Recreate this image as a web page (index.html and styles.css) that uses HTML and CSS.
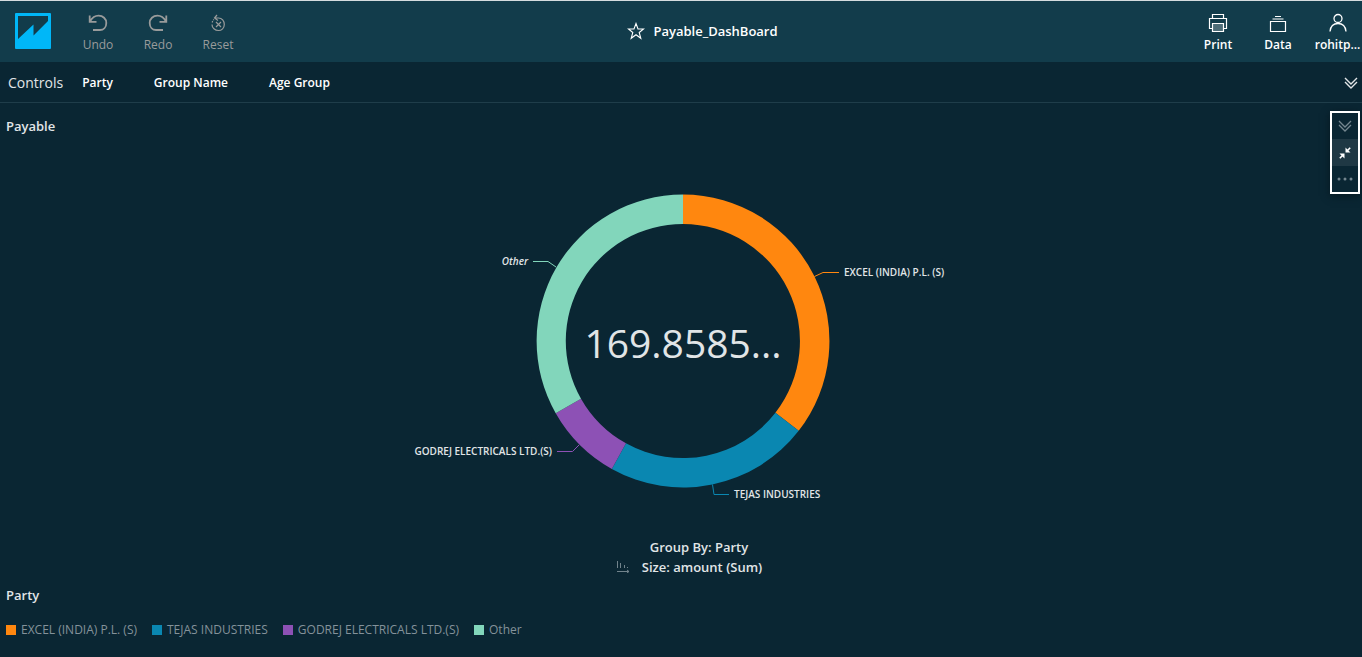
FILE: index.html
```html
<!DOCTYPE html>
<html lang="en">
<head>
<meta charset="utf-8">
<title>Payable_DashBoard</title>
<link rel="stylesheet" href="styles.css">
</head>
<body>
<header class="topbar">
  <div class="topbar-side">
    <a class="logo" href="#" aria-label="Home">
      <svg width="36" height="36" viewBox="0 0 36 36"><rect width="36" height="36" rx="1" fill="#00b7f8"/><path d="M3 3H33V8L18.500 22.500V11.500L3 26Z" fill="#123c4b"/></svg>
    </a>
    <nav class="history">
      <button class="tool muted" type="button">
        <svg width="20" height="20" viewBox="0 0 20 20" fill="none" stroke="currentColor" stroke-width="1.800"><path d="M1.700 2.500V8.800H8.500M2 8.500C4 5 6.500 2.700 10.500 2.700C15 2.700 18.300 5.700 18.300 10C18.300 14.300 15.500 17 12 17H5"/></svg>
        <span>Undo</span>
      </button>
      <button class="tool muted" type="button">
        <svg width="20" height="20" viewBox="0 0 20 20" fill="none" stroke="currentColor" stroke-width="1.800"><path d="M18.300 2.500V8.800H11.500M18 8.500C16 5 13.500 2.700 9.500 2.700C5 2.700 1.700 5.700 1.700 10C1.700 14.300 4.500 17 8 17H15"/></svg>
        <span>Redo</span>
      </button>
      <button class="tool muted" type="button">
        <svg width="20" height="20" viewBox="0 0 20 20" fill="none" stroke="currentColor" stroke-width="1.200"><path d="M9 2L6.500 5L10 7.500M6.500 5H10.500C14 5 16.300 8 16.300 11.500C16.300 15 13.700 17.500 10.500 17.500C7 17.500 4 15 4 11.500"/><path d="M4.200 9.500C4.500 8.300 5 7.300 6 6.500" stroke-dasharray="1.500 1"/><path d="M8 9L13 14M13 9L8 14"/></svg>
        <span>Reset</span>
      </button>
    </nav>
  </div>
  <div class="title">
    <button class="icon-btn" type="button" aria-label="Add to favorites">
      <svg width="18" height="18" viewBox="0 0 18 18" fill="none" stroke="currentColor" stroke-width="1.100"><path d="M9 1.500L11 7H16.500L12.200 10.500L13.800 16.300L9 12.800L4.200 16.300L5.800 10.500L1.500 7H7Z"/></svg>
    </button>
    <h1>Payable_DashBoard</h1>
  </div>
  <div class="topbar-side end">
    <button class="tool" type="button">
      <svg width="20" height="20" viewBox="0 0 20 20" fill="none" stroke="currentColor" stroke-width="1.200"><path d="M4.500 5.500V1.500H15.500V5.500M4.500 15.500H1.500V5.500H18.500V15.500H15.500"/><path d="M4.500 10.500H15.500V18.500H4.500Z"/><path d="M5 11H15V18H5Z" fill="currentColor" fill-opacity=".25" stroke="none"/></svg>
      <span>Print</span>
    </button>
    <button class="tool" type="button">
      <svg width="20" height="20" viewBox="0 0 20 20" fill="none" stroke="currentColor" stroke-width="1.200"><path d="M2.500 8.500H17.500V18.500H2.500ZM4.500 6H15.500M7 3.500H13"/></svg>
      <span>Data</span>
    </button>
    <button class="tool" type="button">
      <svg width="20" height="20" viewBox="0 0 20 20" fill="none" stroke="currentColor" stroke-width="1.300"><circle cx="10" cy="5.500" r="4"/><path d="M2 18.500C2.500 13.500 5.500 10.500 10 10.500C14.500 10.500 17.500 13.500 18 18.500"/></svg>
      <span>rohitp...</span>
    </button>
  </div>
</header>

<section class="controls">
  <h2>Controls</h2>
  <ul>
    <li>Party</li>
    <li>Group Name</li>
    <li>Age Group</li>
  </ul>
  <button class="icon-btn" type="button" aria-label="Expand controls">
    <svg width="14" height="14" viewBox="0 0 14 14" fill="none" stroke="currentColor" stroke-width="1.400"><path d="M1 2L7 8L13 2M1 6L7 12L13 6"/></svg>
  </button>
</section>

<main class="visual">
  <h2>Payable</h2>
  <div class="visual-menu">
    <button type="button" aria-label="Collapse">
      <svg width="14" height="14" viewBox="0 0 14 14" fill="none" stroke="currentColor" stroke-width="1.300"><path d="M1 2L7 8L13 2M1 6L7 12L13 6"/></svg>
    </button>
    <button class="active" type="button" aria-label="Minimize">
      <svg width="12" height="12" viewBox="0 0 12 12" fill="currentColor" stroke="currentColor" stroke-width="1.600"><path d="M6.500 0.500V5.500H11.500ZM0.500 6.500H5.500V11.500Z" stroke="none"/><path d="M7.500 4.500L11.200 0.800M4.500 7.500L0.800 11.200"/></svg>
    </button>
    <button type="button" aria-label="More options">
      <svg width="16" height="4" viewBox="0 0 16 4" fill="currentColor"><circle cx="2" cy="2" r="1.500"/><circle cx="8" cy="2" r="1.500"/><circle cx="14" cy="2" r="1.500"/></svg>
    </button>
  </div>

  <svg class="donut" width="560" height="320" viewBox="-280 -160 560 320" role="img" aria-label="Amount by party">
    <path fill="#ff870f" d="M0-146.500A146.500 146.500 0 0 1 115.700 89.800L92.400 71.700A117 117 0 0 0 0-117Z"/>
    <path fill="#0a87b1" d="M115.700 89.800A146.500 146.500 0 0 1-71.200 128L-57 102.300A117 117 0 0 0 92.400 71.700Z"/>
    <path fill="#8d51b5" d="M-71.200 128A146.500 146.500 0 0 1-127.300 72.300L-102 57.700A117 117 0 0 0-57 102.300Z"/>
    <path fill="#82d6bb" d="M-127.300 72.300A146.500 146.500 0 0 1 0-146.500V-117A117 117 0 0 0-102 57.700Z"/>
    <g fill="none" stroke-width="1">
      <path stroke="#ff870f" d="M131.500-64.500L140-68.500H156"/>
      <path stroke="#0a87b1" d="M29.500 143.500L31 153.500H46"/>
      <path stroke="#8d51b5" d="M-104 104L-110.500 110.500H-126"/>
      <path stroke="#82d6bb" d="M-127-74L-135-79.500H-150"/>
    </g>
    <text class="total" x="0" y="17">169.8585...</text>
    <text class="label" x="161" y="-65">EXCEL (INDIA) P.L. (S)</text>
    <text class="label" x="51" y="157">TEJAS INDUSTRIES</text>
    <text class="label left" x="-131" y="114">GODREJ ELECTRICALS LTD.(S)</text>
    <text class="label left other" x="-155" y="-76">Other</text>
  </svg>

  <div class="fields">
    <p class="group-by">Group By: Party</p>
    <p class="size">
      <svg width="14" height="12" viewBox="0 0 14 12" fill="none" stroke="#71838c"><path d="M1.500 0V7M4.500 2V7M8.500 4V7M11.500 6V7M1 10.500H13M11 9L13 10.500L11 12"/></svg>
      <span>Size: amount (Sum)</span>
    </p>
  </div>

  <section class="legend">
    <h2>Party</h2>
    <ul>
      <li><i class="swatch orange"></i>EXCEL (INDIA) P.L. (S)</li>
      <li><i class="swatch blue"></i>TEJAS INDUSTRIES</li>
      <li><i class="swatch purple"></i>GODREJ ELECTRICALS LTD.(S)</li>
      <li><i class="swatch green"></i>Other</li>
    </ul>
  </section>
</main>
</body>
</html>
```
FILE: styles.css
```css
* { box-sizing: border-box; }

body {
  margin: 0;
  min-height: 100vh;
  display: flex;
  flex-direction: column;
  background: #0a2633;
  color: #e1e5e7;
  font-family: "Open Sans", "Noto Sans", sans-serif;
  font-size: 12px;
  line-height: 20px;
}

h1, h2, p, ul { margin: 0; padding: 0; }
h1, h2 { font-size: 14px; font-weight: 500; }
h2 { font-size: 14px; font-weight: 600; }
h1 { font-size: 13px; font-weight: 600; }
ul { display: flex; list-style: none; }
svg { display: block; }

button {
  padding: 0;
  border: 0;
  background: none;
  color: inherit;
  font: inherit;
  cursor: pointer;
}

.topbar {
  display: grid;
  grid-template-columns: 1fr auto 1fr;
  align-items: center;
  height: 62px;
  padding: 0 0 0 15px;
  border-top: 1px solid #d5dcdf;
  background: #123c4b;
  color: #fff;
}

.topbar-side { display: flex; align-items: center; }
.end { justify-content: flex-end; }
.logo { margin-bottom: 2px; }
.history { display: flex; margin-left: 17px; }

.tool {
  display: flex;
  flex-direction: column;
  align-items: center;
  gap: 2px;
  width: 60px;
  padding-top: 4px;
  font-weight: 600;
}
.end .tool:last-child { width: 49px; margin-left: 5px; }
.muted { color: #999b9b; font-weight: 400; }

.title { display: flex; align-items: center; gap: 8px; padding: 0 0 2px 28px; }

.controls {
  display: flex;
  align-items: center;
  height: 41px;
  padding: 1px 4px 0 8px;
  border-bottom: 1px solid #1f3d4a;
}
.controls h2 { font-weight: 400; }
.controls ul { gap: 41px; margin-left: 19px; font-weight: 600; color: #fff; }
.controls .icon-btn { margin-left: auto; }

.visual {
  position: relative;
  flex: 1;
  display: flex;
  flex-direction: column;
  padding: 13px 2px 17px 6px;
}

.visual-menu {
  position: absolute;
  top: 8px;
  right: 2px;
  display: grid;
  grid-template-rows: 26px 27px 26px;
  width: 30px;
  border: 2px solid #fff;
  color: #74868f;
  box-shadow: 0 2px 8px #061820;
}
.visual-menu button { display: grid; place-items: center; }
.visual-menu .active { background: #1f3844; color: #fff; }

.donut { align-self: center; margin-top: 45px; }
.total { font-size: 39px; font-weight: 500; text-anchor: middle; fill: #e1e5e7; }
.label { font-size: 10px; font-weight: 600; fill: #e1e5e7; }
.left { text-anchor: end; }
.other { font-style: italic; }

.fields {
  display: flex;
  flex-direction: column;
  align-items: center;
  margin-top: 36px;
  font-size: 13px;
  font-weight: 600;
}
.group-by { padding-left: 32px; }
.size { display: flex; align-items: center; gap: 12px; padding-left: 12px; }

.legend { margin-top: auto; }
.legend h2, .visual > h2 { font-size: 13px; }
.legend ul { gap: 15px; margin-top: 15px; color: #84929a; font-weight: 500; }
.legend li { display: flex; align-items: center; gap: 5px; }

.swatch { width: 10px; height: 10px; }
.orange { background: #ff870f; }
.blue { background: #0a87b1; }
.purple { background: #8d51b5; }
.green { background: #82d6bb; }
```
